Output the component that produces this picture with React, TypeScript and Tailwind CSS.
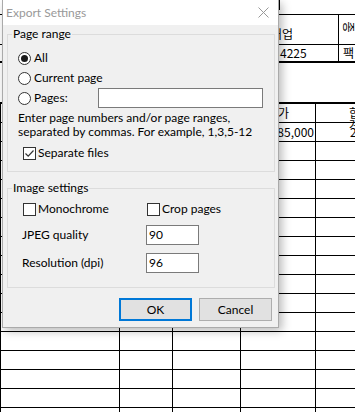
import React from "react";

function Radio({ checked }: { checked?: boolean }) {
  return (
    <span className="flex h-[13px] w-[13px] shrink-0 items-center justify-center rounded-full border border-[#333] bg-white">
      {checked && <span className="h-[7px] w-[7px] rounded-full bg-[#1a1a1a]" />}
    </span>
  );
}

function Check({ checked }: { checked?: boolean }) {
  return (
    <span className="flex h-[13px] w-[13px] shrink-0 items-center justify-center border border-[#333] bg-white">
      {checked && (
        <svg width="11" height="11" viewBox="0 0 11 11">
          <path d="M1.5 5.5 L4.2 8.2 L9.5 2.5" fill="none" stroke="#333" strokeWidth="1.2" />
        </svg>
      )}
    </span>
  );
}

function Field({ value, w }: { value?: string; w: string }) {
  return (
    <div className={`flex h-[20px] items-center border border-[#7a7a7a] bg-white pl-[2px] ${w}`}>
      {value}
    </div>
  );
}

function Group({ label, className, children }: { label: string; className: string; children: React.ReactNode }) {
  return (
    <div className={`relative ml-[4px] mr-[3px] border border-[#dcdcdc] ${className}`}>
      <span className="absolute -top-[9px] left-[4px] bg-[#f0f0f0] px-[1px] leading-[16px]">{label}</span>
      {children}
    </div>
  );
}

function Sheet() {
  const rows = Array.from({ length: 16 });
  return (
    <div className="font-[family-name:'Noto_Sans_CJK_KR',sans-serif] text-[12px] leading-none text-black">
      <div className="h-[14px] pl-[279px]">
        <span className="block h-[10px] w-px bg-black" />
      </div>
      <div className="border-t border-black">
        <div className="flex h-[30px] border-b border-black">
          <div className="w-[339px] border-r border-black pl-[271px] pt-[13px]">어업</div>
          <div className="flex-1 pl-[4px] pt-[6px]">
            <span className="inline-block rotate-90">종</span>
          </div>
        </div>
        <div className="flex h-[18px] border-b-2 border-black">
          <div className="w-[339px] border-r border-black pl-[280px] pt-[2px]">4225</div>
          <div className="flex-1 pl-[4px] pt-[2px]">팩</div>
        </div>
      </div>
      <div className="h-[39px]" />
      <div className="border-l border-t-2 border-black">
        <div className="grid h-[19px] grid-cols-[119px_53px_68px_75px_1fr] border-b border-black">
          <div className="border-r border-black" />
          <div className="border-r border-black" />
          <div className="border-r border-black" />
          <div className="border-r border-black pt-[3px] text-center">단가</div>
          <div className="pl-[33px] pt-[3px]">합계</div>
        </div>
        {rows.map((_, i) => (
          <div key={i} className="grid h-[19px] grid-cols-[119px_53px_68px_75px_1fr] border-b border-black">
            <div className="border-r border-black" />
            <div className="border-r border-black" />
            <div className="border-r border-black" />
            <div className="border-r border-black pr-[1px] pt-[3px] text-right">{i === 0 ? "185,000" : ""}</div>
            <div className="pl-[34px] pt-[3px]">{i === 0 ? "2" : ""}</div>
          </div>
        ))}
      </div>
    </div>
  );
}

function Dialog() {
  return (
    <div className="absolute left-[2px] top-0 flex h-[328px] w-[277px] flex-col border-x border-b border-[#aaa] bg-[#f0f0f0] font-[family-name:Lato,sans-serif] text-[12px] text-black shadow-[3px_3px_9px_rgba(0,0,0,0.28)]">
      <div className="flex h-[25px] shrink-0 items-center justify-between bg-white pl-[3px] pr-[9px] text-[#999]">
        <span>Export Settings</span>
        <svg width="11" height="11" viewBox="0 0 11 11">
          <path d="M0.5 0.5 L10.5 10.5 M10.5 0.5 L0.5 10.5" stroke="#999" strokeWidth="1" />
        </svg>
      </div>

      <Group label="Page range" className="mt-[9px] pb-[8px] pt-[13px]">
        <div className="flex h-[20px] items-center gap-[3px] pl-[10px]">
          <Radio checked />
          <span>All</span>
        </div>
        <div className="flex h-[20px] items-center gap-[3px] pl-[10px]">
          <Radio />
          <span>Current page</span>
        </div>
        <div className="flex h-[20px] items-center">
          <div className="flex w-[90px] items-center gap-[3px] pl-[10px]">
            <Radio />
            <span>Pages:</span>
          </div>
          <Field w="w-[165px]" />
        </div>
        <p className="mt-[3px] pl-[10px] leading-[14px]">
          Enter page numbers and/or page ranges,
          <br />
          separated by commas. For example, 1,3,5-12
        </p>
        <div className="mt-[4px] flex h-[20px] items-center gap-[2px] pl-[15px]">
          <Check checked />
          <span>Separate files</span>
        </div>
      </Group>

      <Group label="Image settings" className="mt-[16px] pb-[14px] pt-[10px]">
        <div className="flex h-[20px] items-center pl-[15px]">
          <div className="flex w-[124px] items-center gap-[2px]">
            <Check />
            <span>Monochrome</span>
          </div>
          <div className="flex items-center gap-[2px]">
            <Check />
            <span>Crop pages</span>
          </div>
        </div>
        <div className="mt-[6px] flex h-[20px] items-center pl-[14px]">
          <span className="w-[124px]">JPEG quality</span>
          <Field value="90" w="w-[53px]" />
        </div>
        <div className="mt-[8px] flex h-[20px] items-center pl-[14px]">
          <span className="w-[124px]">Resolution (dpi)</span>
          <Field value="96" w="w-[53px]" />
        </div>
      </Group>

      <div className="mt-[10px] flex justify-end gap-[7px] pr-[6px]">
        <button className="flex h-[23px] w-[73px] items-center justify-center border-2 border-[#0078d7] bg-[#e1e1e1]">
          OK
        </button>
        <button className="flex h-[23px] w-[73px] items-center justify-center border border-[#adadad] bg-[#e1e1e1]">
          Cancel
        </button>
      </div>
    </div>
  );
}

export default function App() {
  return (
    <div className="relative h-[412px] w-[355px] overflow-hidden bg-white">
      <Sheet />
      <Dialog />
    </div>
  );
}
